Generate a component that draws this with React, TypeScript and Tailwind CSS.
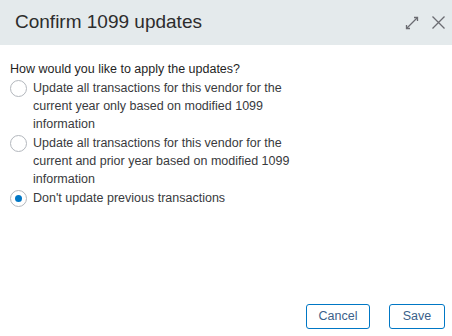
import React from 'react'

const options = [
  'Update all transactions for this vendor for the current year only based on modified 1099 information',
  'Update all transactions for this vendor for the current and prior year based on modified 1099 information',
  "Don't update previous transactions",
]

const App: React.FC = () => {
  const [selected, setSelected] = React.useState(2)
  return (
    <div className="w-[452px] h-[336px] bg-white flex flex-col font-['Liberation_Sans',Arial,sans-serif] text-[#393a3d]">
      {/* Header */}
      <div className="h-[45px] bg-[#e4eaec] flex items-center justify-between pl-[15px] pr-[6px]">
        <h2 className="text-[19px] text-[#2d2d2d]">Confirm 1099 updates</h2>
        <div className="flex items-center gap-[10px] text-[#6b6c72]">
          <svg width="18" height="18" viewBox="0 0 18 18" fill="none" stroke="currentColor" strokeWidth="1.3">
            <path d="M3.5 14.5 L14.5 3.5" />
            <path d="M11 3.5 H14.5 V7" />
            <path d="M3.5 11 V14.5 H7" />
          </svg>
          <svg width="15" height="15" viewBox="0 0 15 15" fill="none" stroke="currentColor" strokeWidth="1.3">
            <path d="M1.5 1.5 L13.5 13.5 M13.5 1.5 L1.5 13.5" />
          </svg>
        </div>
      </div>

      {/* Body */}
      <div className="flex-1 px-[10px] pt-[16px]">
        <p className="text-[12.5px] text-[#1f1f1f] leading-[17px]">How would you like to apply the updates?</p>
        <div className="flex flex-col gap-[1px] mt-[1px]">
          {options.map((label, i) => (
            <label key={i} className="flex items-start gap-[6px] cursor-pointer" onClick={() => setSelected(i)}>
              <span className="mt-[1px] w-[17px] h-[17px] shrink-0 rounded-full border border-[#b3b7bd] flex items-center justify-center bg-white">
                {selected === i && <span className="w-[7px] h-[7px] rounded-full bg-[#0077c5]" />}
              </span>
              <span className="text-[12.5px] leading-[18px] text-[#393a3d] w-[265px]">{label}</span>
            </label>
          ))}
        </div>
      </div>

      {/* Footer */}
      <div className="flex justify-end gap-[19px] pr-[7px] pb-[7px]">
        <button className="w-[64px] h-[25px] rounded-[3px] border border-[#0077c5] text-[12.5px] text-[#3b5f8a] bg-white">Cancel</button>
        <button className="w-[56px] h-[25px] rounded-[3px] border border-[#0077c5] text-[12.5px] text-[#3b5f8a] bg-white">Save</button>
      </div>
    </div>
  )
}

export default App
